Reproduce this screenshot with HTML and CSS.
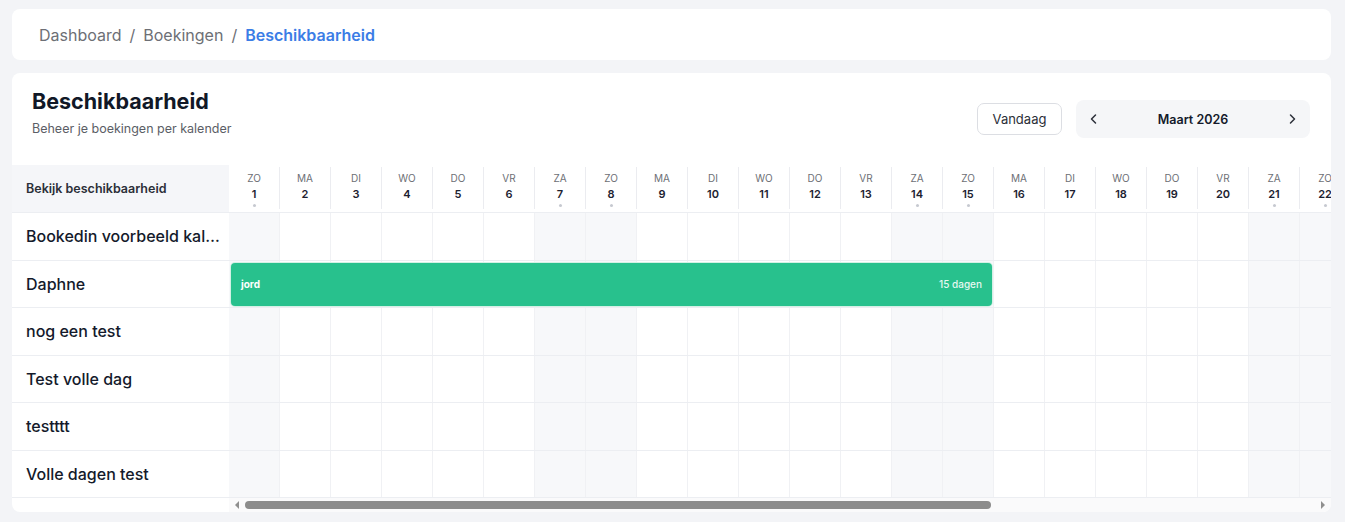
FILE: index.html
```html
<!DOCTYPE html>
<html lang="nl">

<head>
    <meta charset="utf-8">
    <meta name="viewport" content="width=device-width, initial-scale=1.0">
    <title>Beschikbaarheid</title>
    <link rel="stylesheet" href="styles.css">
</head>

<body>
    <nav class="kruimels kaart">
        <a href="#">Dashboard</a>
        <span class="scheiding">/</span>
        <a href="#">Boekingen</a>
        <span class="scheiding">/</span>
        <span class="actief">Beschikbaarheid</span>
    </nav>

    <section class="paneel kaart">
        <div class="paneel-kop">
            <div>
                <h1>Beschikbaarheid</h1>
                <p class="sub">Beheer je boekingen per kalender</p>
            </div>
            <div class="bediening">
                <button class="vandaag">Vandaag</button>
                <div class="maand-nav">
                    <button class="pijl" aria-label="Vorige maand">
                        <svg width="14" height="14" viewBox="0 0 14 14"><path d="M8.5 3 4.5 7l4 4" fill="none" stroke="#2b2f38" stroke-width="1.5" stroke-linecap="round" stroke-linejoin="round"/></svg>
                    </button>
                    <span class="maand">Maart 2026</span>
                    <button class="pijl" aria-label="Volgende maand">
                        <svg width="14" height="14" viewBox="0 0 14 14"><path d="M5.5 3l4 4-4 4" fill="none" stroke="#2b2f38" stroke-width="1.5" stroke-linecap="round" stroke-linejoin="round"/></svg>
                    </button>
                </div>
            </div>
        </div>

        <div class="rooster">
            <div class="namen">
                <div class="namen-kop">Bekijk beschikbaarheid</div>
            </div>
            <div class="dagen">
                <div class="dagen-binnen">
                    <div class="dag-kop"></div>
                </div>
                <!-- horizontale schuifbalk onder de dagen -->
                <div class="schuifbalk">
                    <span class="sb-pijl links"></span>
                    <span class="sb-duim"></span>
                    <span class="sb-pijl rechts"></span>
                </div>
            </div>
        </div>
    </section>

    <script>
        let dagNamen = ["ZO", "MA", "DI", "WO", "DO", "VR", "ZA"];
        let kalenders = ["Bookedin voorbeeld kalender", "Daphne", "nog een test", "Test volle dag", "testttt", "Volle dagen test"];
        let boekingen = [{ kalender: "Daphne", naam: "jord", van: 1, tot: 15 }];
        let kolom = 51; // breedte van een dag in px
        let aantalDagen = 31;

        let namen = document.querySelector(".namen");
        let binnen = document.querySelector(".dagen-binnen");
        let kop = document.querySelector(".dag-kop");

        function isWeekend(dag) {
            let wd = new Date(2026, 2, dag).getDay();
            return wd == 0 || wd == 6;
        }

        // kopregel met de dagen
        for (let d = 1; d <= aantalDagen; d++) {
            let cel = document.createElement("div");
            cel.className = "kop-cel";
            cel.innerHTML = '<span class="dag-naam">' + dagNamen[new Date(2026, 2, d).getDay()] + '</span>' +
                '<span class="dag-nr">' + d + '</span>' +
                '<span class="stip"></span>';
            if (isWeekend(d)) cel.classList.add("weekend");
            kop.appendChild(cel);
        }

        // een rij per kalender
        kalenders.forEach(naam => {
            let label = document.createElement("div");
            label.className = "naam";
            label.textContent = naam;
            namen.appendChild(label);

            let rij = document.createElement("div");
            rij.className = "rij";
            for (let d = 1; d <= aantalDagen; d++) {
                let cel = document.createElement("div");
                cel.className = "cel";
                if (isWeekend(d)) cel.classList.add("weekend");
                rij.appendChild(cel);
            }

            boekingen.filter(b => b.kalender == naam).forEach(b => {
                let balk = document.createElement("div");
                balk.className = "boeking";
                balk.style.left = ((b.van - 1) * kolom + 2) + "px";
                balk.style.width = ((b.tot - b.van + 1) * kolom - 4) + "px";
                let dagen = b.tot - b.van + 1;
                balk.innerHTML = '<span class="boeking-naam">' + b.naam + '</span><span class="boeking-duur">' + dagen + ' dagen</span>';
                rij.appendChild(balk);
            });

            binnen.appendChild(rij);
        });
    </script>
</body>

</html>
```

FILE: styles.css
```css
* {
    box-sizing: border-box;
}

body {
    margin: 0;
    padding: 9px 14px 10px 12px;
    background-color: #f3f4f7;
    font-family: "Inter", "Open Sans", sans-serif;
    color: #141a2b;
}

.kaart {
    background-color: #fff;
    border-radius: 8px;
}

/* kruimelpad */

.kruimels {
    height: 51px;
    display: flex;
    align-items: center;
    gap: 8px;
    padding: 0 27px;
    font-size: 16px;
    margin-bottom: 13px;
}

.kruimels a {
    color: #6d6f75;
    text-decoration: none;
}

.kruimels .scheiding {
    color: #6d6f75;
}

.kruimels .actief {
    color: #3b7de6;
    font-weight: 600;
}

/* paneel */

.paneel {
    overflow: hidden;
}

.paneel-kop {
    height: 92px;
    display: flex;
    justify-content: space-between;
    align-items: flex-start;
    padding: 14px 21px 0 20px;
}

h1 {
    margin: 0;
    font-size: 21.5px;
    line-height: 28px;
    font-weight: 700;
    color: #111827;
}

.sub {
    margin: 5px 0 0;
    font-size: 12.5px;
    line-height: 18px;
    color: #5b5e66;
}

.bediening {
    display: flex;
    align-items: center;
    gap: 14px;
    margin-top: 13px;
}

.vandaag {
    width: 85px;
    height: 32px;
    border: 1px solid #dcdee3;
    border-radius: 7px;
    background: #fff;
    font-family: inherit;
    font-size: 13px;
    color: #2b2f38;
}

.maand-nav {
    width: 234px;
    height: 38px;
    display: flex;
    align-items: center;
    justify-content: space-between;
    padding: 0 11px;
    background-color: #f5f6f8;
    border-radius: 8px;
}

.pijl {
    border: 0;
    background: none;
    padding: 0;
    width: 14px;
    height: 14px;
    display: flex;
}

.maand {
    font-size: 12.5px;
    font-weight: 600;
    color: #141a2b;
}

/* rooster */

.rooster {
    display: flex;
}

.namen {
    width: 217px;
    flex-shrink: 0;
}

.namen-kop {
    height: 48px;
    display: flex;
    align-items: center;
    padding-left: 14px;
    background-color: #f5f6f9;
    border-bottom: 1px solid #eceef2;
    font-size: 12.5px;
    font-weight: 600;
    color: #2b2f38;
}

.naam {
    height: 47.5px;
    line-height: 46.5px;
    padding-left: 14px;
    border-bottom: 1px solid #eceef2;
    font-size: 16px;
    font-weight: 500;
    color: #141a2b;
    white-space: nowrap;
    overflow: hidden;
    text-overflow: ellipsis;
}

.dagen {
    flex: 1;
    min-width: 0;
    overflow: hidden;
}

.dagen-binnen {
    width: 1581px;
}

.dag-kop {
    height: 48px;
    display: flex;
    border-bottom: 1px solid #eceef2;
}

.kop-cel {
    width: 51px;
    flex-shrink: 0;
    display: flex;
    flex-direction: column;
    align-items: center;
    padding-top: 5px;
    border-right: 1px solid #ebecf0;
    margin: 2px 0 3px;
}

.dag-naam {
    font-size: 10px;
    line-height: 12px;
    color: #6d6f75;
}

.dag-nr {
    margin-top: 3px;
    font-size: 11px;
    line-height: 14px;
    font-weight: 600;
    color: #1c2130;
}

.stip {
    width: 3px;
    height: 3px;
    margin-top: 3px;
    border-radius: 50%;
}

.kop-cel.weekend .stip {
    background-color: #c6c9d0;
}

.rij {
    position: relative;
    height: 47.5px;
    display: flex;
    border-bottom: 1px solid #eceef2;
}

.cel {
    width: 51px;
    flex-shrink: 0;
    border-right: 1px solid #f0f1f4;
}

.cel.weekend {
    background-color: #f7f8fa;
}

.boeking {
    position: absolute;
    top: 2px;
    bottom: 1px;
    display: flex;
    align-items: center;
    justify-content: space-between;
    padding: 0 10px;
    background-color: #28c18d;
    border-radius: 4px;
    box-shadow: 0 0 0 1px #d3f1e5;
    color: #fff;
    font-size: 10px;
}

.boeking-naam {
    font-weight: 700;
}

.boeking-duur {
    font-weight: 500;
    color: #e6f8f1;
}

/* schuifbalk */

.schuifbalk {
    height: 14px;
    display: flex;
    align-items: center;
    background-color: #fafafb;
    padding: 0 6px;
}

.sb-pijl {
    width: 0;
    height: 0;
    border-top: 4px solid transparent;
    border-bottom: 4px solid transparent;
}

.sb-pijl.links {
    border-right: 4px solid #8f8f8f;
}

.sb-pijl.rechts {
    margin-left: auto;
    border-left: 4px solid #8f8f8f;
}

.sb-duim {
    width: 746px;
    height: 8px;
    margin-left: 6px;
    background-color: #8c8c8c;
    border-radius: 4px;
}
```
